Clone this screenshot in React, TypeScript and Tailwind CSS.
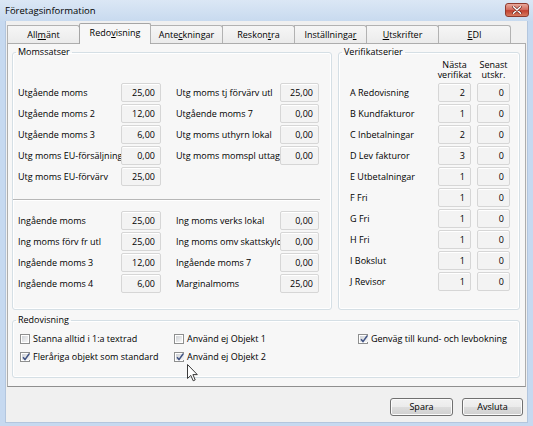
import React from "react";

const tabs = [
  { pre: "All", u: "m", post: "änt" },
  { pre: "Redo", u: "v", post: "isning" },
  { pre: "Ante", u: "c", post: "kningar" },
  { pre: "Reskon", u: "t", post: "ra" },
  { pre: "Inställninga", u: "r", post: "" },
  { pre: "", u: "U", post: "tskrifter" },
  { pre: "", u: "E", post: "DI" },
];

const upperLeft: [string, string][] = [
  ["Utgående moms", "25,00"],
  ["Utgående moms 2", "12,00"],
  ["Utgående moms 3", "6,00"],
  ["Utg moms EU-försäljning", "0,00"],
  ["Utg moms EU-förvärv", "25,00"],
];
const upperRight: [string, string][] = [
  ["Utg moms tj förvärv utl", "25,00"],
  ["Utgående moms 7", "0,00"],
  ["Utg moms uthyrn lokal", "0,00"],
  ["Utg moms momspl uttag", "0,00"],
];
const lowerLeft: [string, string][] = [
  ["Ingående moms", "25,00"],
  ["Ing moms förv fr utl", "25,00"],
  ["Ingående moms 3", "12,00"],
  ["Ingående moms 4", "6,00"],
];
const lowerRight: [string, string][] = [
  ["Ing moms verks lokal", "0,00"],
  ["Ing moms omv skattskyldighet", "0,00"],
  ["Ingående moms 7", "0,00"],
  ["Marginalmoms", "25,00"],
];
const series: [string, string][] = [
  ["A Redovisning", "2"],
  ["B Kundfakturor", "1"],
  ["C Inbetalningar", "2"],
  ["D Lev fakturor", "3"],
  ["E Utbetalningar", "1"],
  ["F Fri", "1"],
  ["G Fri", "1"],
  ["H Fri", "1"],
  ["I Bokslut", "1"],
  ["J Revisor", "1"],
];

const fieldCls =
  "h-[19px] flex items-center justify-end pr-[5px] bg-[#f3f3f3] border border-[#d6d6d6] rounded-[2px] shadow-[inset_0_1px_0_#ffffff] shrink-0";

function MomsCol({ rows, boxW }: { rows: [string, string][]; boxW: "a" | "b" }) {
  return (
    <div className="w-[143px] flex flex-col gap-[2px]">
      {rows.map(([l, v]) => (
        <div key={l} className="flex items-center h-[19px]">
          <div className="flex-1 overflow-hidden whitespace-nowrap pr-[1px]">{l}</div>
          <div className={boxW === "a" ? `${fieldCls} w-[40px]` : `${fieldCls} w-[39px]`}>{v}</div>
        </div>
      ))}
    </div>
  );
}

function Check({ checked }: { checked?: boolean }) {
  return (
    <span className="w-[10px] h-[10px] border border-[#8e8f8f] bg-[#ffffff] p-px shrink-0 flex">
      <span className="flex-1 bg-[linear-gradient(135deg,#cfd2d6,#f7f7f7)] flex items-center justify-center">
        {checked && (
          <svg width="8" height="8" viewBox="0 0 8 8" className="overflow-visible">
            <path d="M1 4.3 L3 6.6 L7.2 0.8" stroke="#3f5283" strokeWidth="1.5" fill="none" />
          </svg>
        )}
      </span>
    </span>
  );
}

function CheckItem({ label, checked }: { label: string; checked?: boolean }) {
  return (
    <div className="flex items-center gap-[3px] h-[14px] whitespace-nowrap">
      <Check checked={checked} />
      <span>{label}</span>
    </div>
  );
}

export default function App() {
  return (
    <div className="relative w-[533px] h-[426px] overflow-hidden bg-[#c6d9f0] font-['Open_Sans',sans-serif] text-[9px] leading-[12px] text-black">
      {/* Title bar */}
      <div className="h-[21px] flex items-center justify-between pl-[5px] pr-[4px] bg-[linear-gradient(#dbe7f5,#c8daef)]">
        <span className="text-[9.5px] pt-[1px]">Företagsinformation</span>
        <div className="w-[24px] h-[14px] mb-[2px] rounded-[3px] border border-[#8e3a2e] bg-[linear-gradient(#e9a99b,#d0685a_50%,#c1402f_55%,#d77a5f)] flex items-center justify-center">
          <svg width="10" height="8" viewBox="0 0 10 8">
            <path d="M1.5 0.8 L8.5 7.2 M8.5 0.8 L1.5 7.2" stroke="#5a1a12" strokeWidth="2.6" strokeLinecap="round" />
            <path d="M1.5 0.8 L8.5 7.2 M8.5 0.8 L1.5 7.2" stroke="#ffffff" strokeWidth="1.5" strokeLinecap="round" />
          </svg>
        </div>
      </div>

      {/* Client area */}
      <div className="ml-[5px] w-[523px] h-[402px] bg-[#f0f0f0] border-x border-b border-[#b3c6de]">
        {/* Tab strip */}
        <div className="relative z-10 flex items-end h-[22px] pl-[1px]">
          {tabs.map((t, i) =>
            i === 1 ? (
              <div
                key={i}
                className="w-[72px] h-[21px] -mb-px -ml-px bg-[#f7f7f7] border border-b-0 border-[#a5a5a5] rounded-t-[2px] flex items-center justify-center pb-[2px]"
              >
                {t.pre}
                <span className="underline underline-offset-[1px]">{t.u}</span>
                {t.post}
              </div>
            ) : (
              <div
                key={i}
                className={`${i === 0 ? "" : "-ml-px"} w-[73px] h-[18px] border border-b-0 border-[#b2b2b2] rounded-tr-[3px] bg-[linear-gradient(#f6f6f6,#ebebeb)] flex items-center justify-center`}
              >
                {t.pre}
                <span className="underline underline-offset-[1px]">{t.u}</span>
                {t.post}
              </div>
            )
          )}
        </div>

        {/* Tab panel */}
        <div className="ml-px w-[519px] border border-[#adadad] border-b-[#8f8f8f] bg-[#f7f7f7] pl-[4px] pr-[5px] pt-[2px] pb-[8px]">
          <div className="flex gap-[6px]">
            {/* Momssatser */}
            <fieldset className="w-[320px] h-[264px] border border-[#d5dfe5] rounded-[3px] shadow-[inset_0_0_0_1px_#ffffff]">
              <legend className="ml-[3px] px-[2px] leading-[12px]">Momssatser</legend>
              <div className="pl-[5px] pt-[25px]">
                <div className="flex gap-[15px]">
                  <MomsCol rows={upperLeft} boxW="a" />
                  <MomsCol rows={upperRight} boxW="b" />
                </div>
                <div className="-ml-[5px] w-[307px] mt-[13px] border-t border-[#b7b7b7] border-b border-b-white" />
                <div className="flex gap-[15px] mt-[10px]">
                  <MomsCol rows={lowerLeft} boxW="a" />
                  <MomsCol rows={lowerRight} boxW="b" />
                </div>
              </div>
            </fieldset>

            {/* Verifikatserier */}
            <fieldset className="w-[182px] h-[264px] border border-[#d5dfe5] rounded-[3px] shadow-[inset_0_0_0_1px_#ffffff]">
              <legend className="ml-[3px] px-[2px] leading-[12px]">Verifikatserier</legend>
              <div className="pl-[11px] pt-[2px]">
                <div className="flex h-[20px] mb-[3px] leading-[10px]">
                  <div className="w-[88px]" />
                  <div className="w-[33px] flex flex-col items-center whitespace-nowrap">
                    <span>Nästa</span>
                    <span>verifikat</span>
                  </div>
                  <div className="w-[6px]" />
                  <div className="w-[33px] flex flex-col items-center whitespace-nowrap">
                    <span>Senast</span>
                    <span>utskr.</span>
                  </div>
                </div>
                <div className="flex flex-col gap-[2px]">
                  {series.map(([l, v]) => (
                    <div key={l} className="flex items-center h-[19px]">
                      <div className="w-[88px] whitespace-nowrap">{l}</div>
                      <div className={`${fieldCls} w-[33px] pr-[4px]`}>{v}</div>
                      <div className="w-[6px]" />
                      <div className={`${fieldCls} w-[33px] pr-[4px]`}>0</div>
                    </div>
                  ))}
                </div>
              </div>
            </fieldset>
          </div>

          {/* Redovisning */}
          <fieldset className="mt-[4px] w-[508px] h-[64px] border border-[#d5dfe5] rounded-[3px] shadow-[inset_0_0_0_1px_#ffffff]">
            <legend className="ml-[3px] px-[2px] leading-[12px]">Redovisning</legend>
            <div className="pl-[7px] pt-[6px] grid grid-cols-[154px_184px_1fr] gap-y-[4px]">
              <CheckItem label="Stanna alltid i 1:a textrad" />
              <CheckItem label="Använd ej Objekt 1" />
              <CheckItem label="Genväg till kund- och levbokning" checked />
              <CheckItem label="Fleråriga objekt som standard" checked />
              <CheckItem label="Använd ej Objekt 2" checked />
              <div />
            </div>
          </fieldset>
        </div>

        {/* Buttons */}
        <div className="flex justify-end gap-[9px] mt-[11px] pr-[4px]">
          <button className="w-[63px] h-[18px] border border-[#707070] rounded-[3px] bg-[linear-gradient(#f2f2f2,#ebebeb_50%,#dddddd_50%,#cfcfcf)] shadow-[inset_0_0_0_1px_#fbfbfb] flex items-center justify-center">
            Spara
          </button>
          <button className="w-[61px] h-[18px] border border-[#707070] rounded-[3px] bg-[linear-gradient(#f2f2f2,#ebebeb_50%,#dddddd_50%,#cfcfcf)] shadow-[inset_0_0_0_1px_#fbfbfb] flex items-center justify-center">
            Avsluta
          </button>
        </div>
      </div>

      {/* Mouse cursor */}
      <svg className="absolute left-[187px] top-[364px]" width="12" height="18" viewBox="0 0 12 18">
        <path d="M0.5 0.5 V14.5 L3.8 11.4 L6.2 16.8 L8.2 15.9 L5.9 10.6 H10.3 Z" fill="#ffffff" stroke="#3a3a3a" strokeWidth="1" strokeLinejoin="round" />
      </svg>
    </div>
  );
}
